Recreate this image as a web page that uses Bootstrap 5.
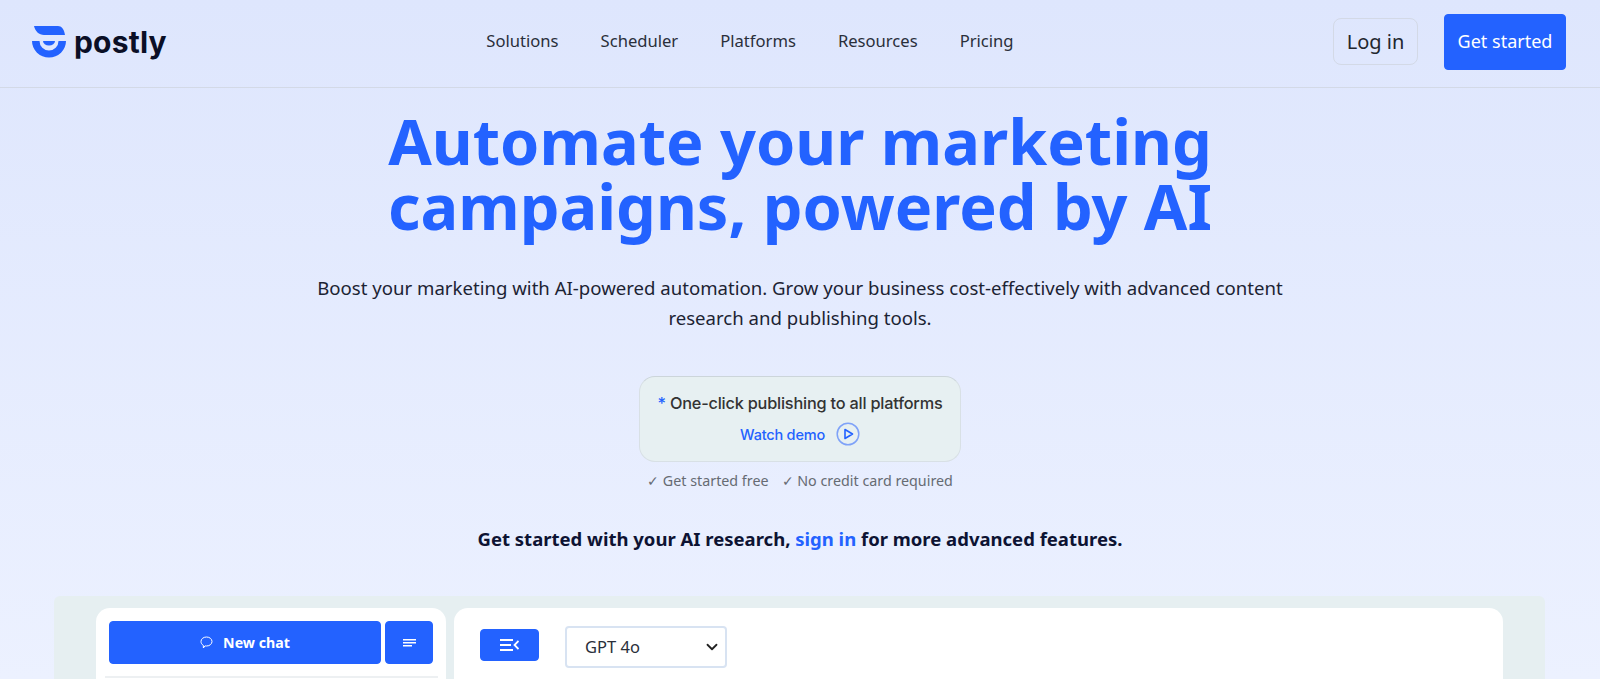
<!DOCTYPE html>
<html lang="en">
<head>
  <meta charset="UTF-8">
  <title>Postly</title>
  <link href="https://cdn.jsdelivr.net/npm/bootstrap@5.3.0/dist/css/bootstrap.min.css" rel="stylesheet">
  <style>
    html, body { height: 100%; overflow: hidden; }
    body { font-family: "Noto Sans", sans-serif; color: #1c2333; background: linear-gradient(180deg, #dee6fd 0%, #ecf1ff 100%); }
    .top-bar { height: 88px; padding: 0 34px 4px 32px; border-bottom: 1px solid #d3d9e6; }
    .brand-name { font-family: Inter, sans-serif; font-weight: 700; font-size: 30px; letter-spacing: 0.2px; line-height: 1; color: #0b0f26; }
    .top-links { gap: 42px; }
    .top-links .nav-link { padding: 0; color: #2a2f3a; font-size: 16.6px; }
    .btn-login { width: 85px; height: 47px; padding: 0; font-size: 20px; color: #22262e; border: 1px solid #d3d9e6; border-radius: 8px; }
    .btn-start { width: 122px; height: 56px; padding: 0; font-size: 18px; margin-left: 26px; border-radius: 4px; }
    .btn-brand { background: #2362ff; border-color: #2362ff; color: #fff; }
    .hero-title { margin: 20px 0 0; font-size: 63px; line-height: 65px; font-weight: 700; color: #2362ff; }
    .hero-sub { width: 1000px; margin: 35px auto 0; font-size: 18.6px; line-height: 30px; }
    .demo-box { width: 322px; height: 86px; margin: 43px auto 0; padding-top: 14px; background: #e7f0f2; border: 1px solid #d8e0e5; border-top-color: #ccd5da; border-radius: 16px; font-family: Inter, sans-serif; font-weight: 500; color: #333; font-size: 16.3px; letter-spacing: -0.2px; }
    .demo-box .star { color: #2362ff; }
    .demo-link { margin-top: 7px; gap: 11px; color: #2362ff; font-size: 14.5px; }
    .check-line { margin-top: 8px; font-size: 14.3px; color: #666b73; gap: 13px; }
    .signin-line { margin-top: 34px; font-size: 18.5px; font-weight: 700; color: #0d1333; }
    .signin-line a { color: #2362ff; text-decoration: none; }
    .demo-panel { margin: 43px 55px 0 54px; height: 400px; padding: 12px 42px; background: #e6eff1; border-radius: 6px; gap: 8px; }
    .side-card { width: 350px; flex: none; padding: 13px 12px 13px 13px; background: #fff; border-radius: 14px; }
    .main-card { flex: 1; padding: 18px 26px; background: #fff; border-radius: 14px; gap: 26px; }
    .btn-chat { width: 272px; height: 43px; padding: 0; font-size: 14.2px; font-weight: 700; border-radius: 4px; gap: 10px; }
    .btn-lines { width: 48px; height: 43px; padding: 0; margin-left: 4px; border-radius: 4px; }
    .side-rule { margin: 12px -4px 0; height: 2px; background: #edf0f2; }
    .btn-toggle { width: 59px; height: 32px; padding: 0; margin-top: 3px; border-radius: 4px; }
    .model-select { width: 162px; height: 42px; padding-left: 18px; font-size: 16.5px; color: #2a2f3a; border: 2px solid #d8e3f2; border-radius: 4px; background-position: right 5px center; background-image: url("data:image/svg+xml,%3csvg xmlns='http://www.w3.org/2000/svg' viewBox='0 0 16 16'%3e%3cpath fill='none' stroke='%23222' stroke-linecap='round' stroke-linejoin='round' stroke-width='2.4' d='m2 5 6 6 6-6'/%3e%3c/svg%3e"); }
  </style>
</head>
<body>
  <nav class="top-bar d-flex align-items-center">
    <a href="#" class="d-flex align-items-center gap-2 text-decoration-none">
      <svg width="34" height="32" viewBox="0 0 34 32" fill="#2362ff">
        <path d="M2 0H26C29.500 0 32 3 33 9H12C7 9 3 5 2 0Z"/>
        <path d="M0 15H7.500A9.500 9.500 0 0 0 26.500 15H34A17 16.500 0 0 1 0 15Z"/>
        <path d="M11 15H23A6 4.500 0 0 1 11 15Z"/>
      </svg>
      <span class="brand-name">postly</span>
    </a>
    <ul class="nav top-links mx-auto">
      <li class="nav-item"><a class="nav-link" href="#">Solutions</a></li>
      <li class="nav-item"><a class="nav-link" href="#">Scheduler</a></li>
      <li class="nav-item"><a class="nav-link" href="#">Platforms</a></li>
      <li class="nav-item"><a class="nav-link" href="#">Resources</a></li>
      <li class="nav-item"><a class="nav-link" href="#">Pricing</a></li>
    </ul>
    <button class="btn btn-login">Log in</button>
    <button class="btn btn-brand btn-start">Get started</button>
  </nav>

  <main class="text-center">
    <h1 class="hero-title">Automate your marketing<br>campaigns, powered by AI</h1>
    <p class="hero-sub">Boost your marketing with AI-powered automation. Grow your business cost-effectively with advanced content research and publishing tools.</p>
    <div class="demo-box">
      <div><span class="star">*</span> One-click publishing to all platforms</div>
      <div class="demo-link d-flex align-items-center justify-content-center">
        <span>Watch demo</span>
        <svg width="24" height="24" viewBox="0 0 24 24" fill="none" stroke="#2362ff">
          <circle cx="12" cy="12" r="10.800" stroke="#7fa2f8" stroke-width="1.500"/>
          <path d="M9 7.500L16.500 12L9 16.500Z" stroke-width="1.600" stroke-linejoin="round"/>
        </svg>
      </div>
    </div>
    <div class="check-line d-flex justify-content-center">
      <span>✓ Get started free</span>
      <span>✓ No credit card required</span>
    </div>
    <p class="signin-line mb-0">Get started with your AI research, <a href="#">sign in</a> for more advanced features.</p>
  </main>

  <section class="demo-panel d-flex">
    <div class="side-card">
      <div class="d-flex">
        <button class="btn btn-brand btn-chat d-flex align-items-center justify-content-center">
          <svg width="13" height="13" viewBox="0 0 13 13" fill="none" stroke="#fff" stroke-width="1">
            <path d="M6.500 1C9.700 1 12 3 12 5.500S9.700 10 6.500 10C6 10 5.500 10 5 9.800L3.400 12L3.300 9.300C1.800 8.500 1 7.100 1 5.500C1 3 3.300 1 6.500 1Z"/>
          </svg>
          <span>New chat</span>
        </button>
        <button class="btn btn-brand btn-lines">
          <svg width="13" height="8" viewBox="0 0 13 8" fill="#fff" class="d-block mx-auto">
            <rect width="13" height="1.500"/><rect y="3" width="13" height="1.500"/><rect y="6" width="9" height="1.500"/>
          </svg>
        </button>
      </div>
      <div class="side-rule"></div>
    </div>
    <div class="main-card d-flex align-items-start">
      <button class="btn btn-brand btn-toggle">
        <svg width="19" height="12" viewBox="0 0 19 12" fill="none" stroke="#fff" stroke-width="1.800" class="d-block mx-auto">
          <path d="M0 1H13M0 6H11M0 11H13M18.500 2L14.500 6L18.500 10"/>
        </svg>
      </button>
      <select class="form-select model-select">
        <option>GPT 4o</option>
      </select>
    </div>
  </section>
  <script src="https://cdn.jsdelivr.net/npm/bootstrap@5.3.0/dist/js/bootstrap.bundle.min.js"></script>
</body>
</html>
